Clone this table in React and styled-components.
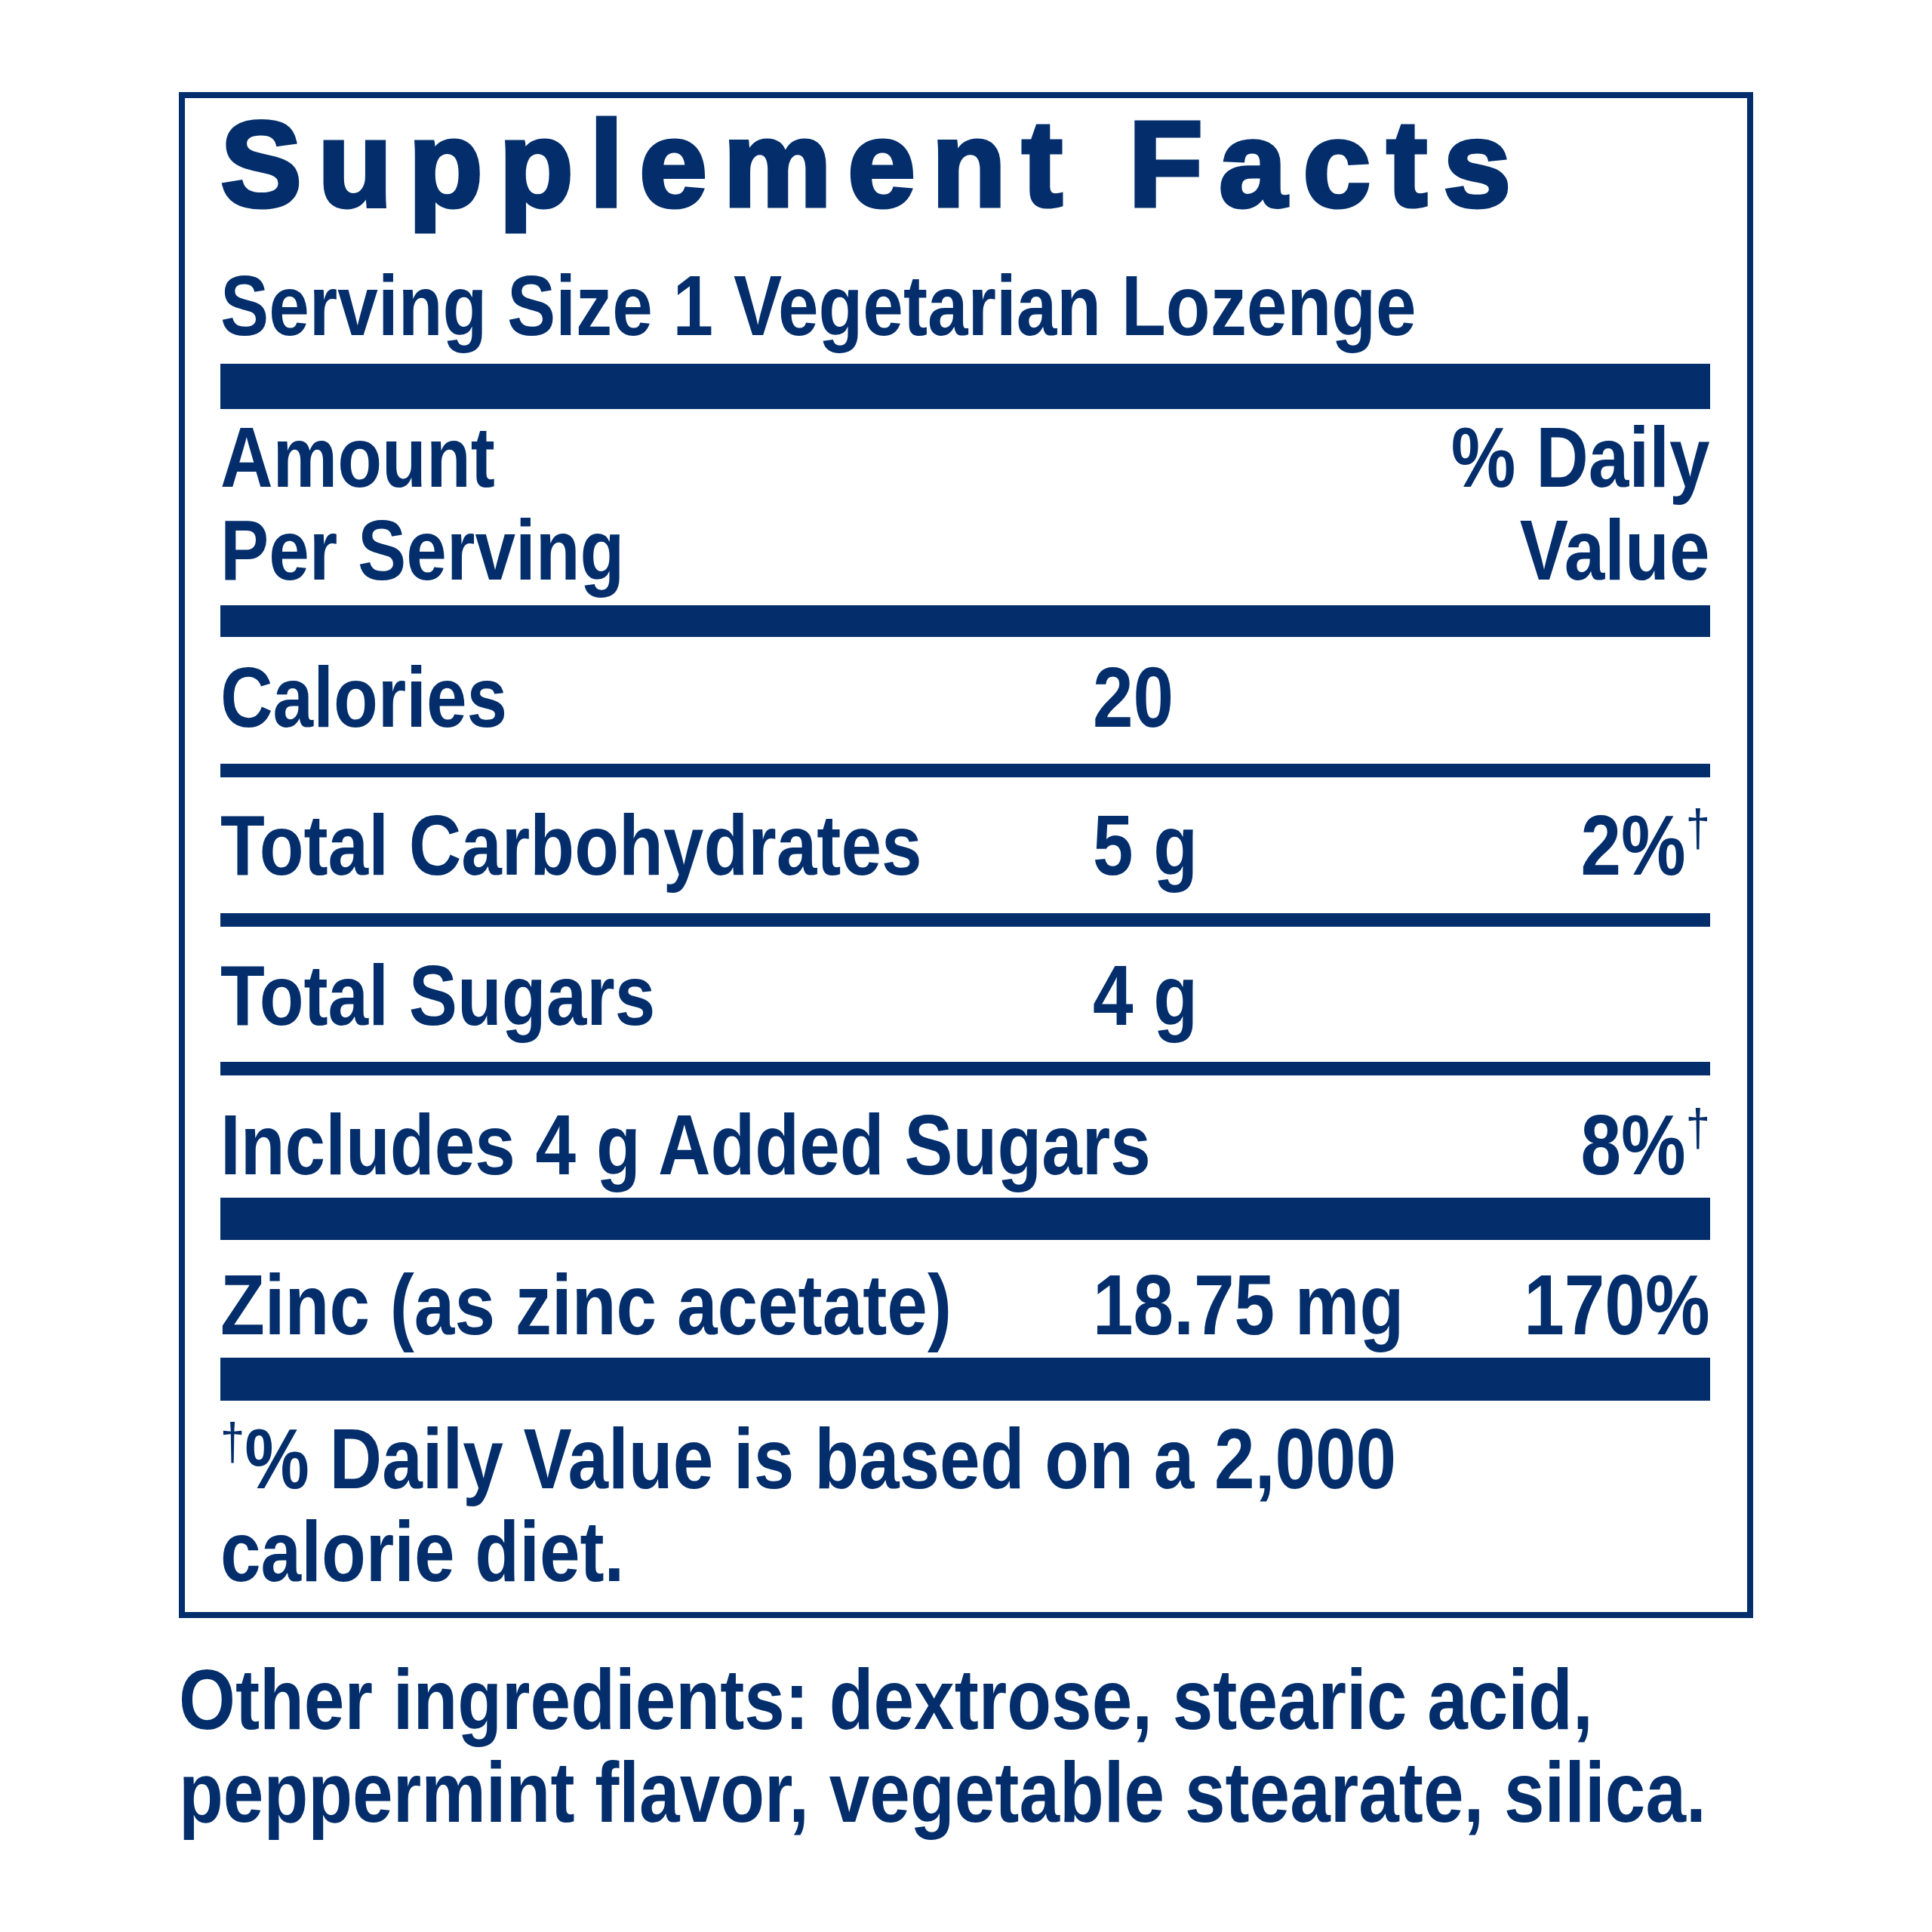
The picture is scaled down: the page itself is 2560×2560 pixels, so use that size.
import styled, { createGlobalStyle } from "styled-components";

const NAVY = "#032e6b";

const Global = createGlobalStyle`
  body {
    margin: 0;
    background: #fff;
    color: ${NAVY};
    font-family: "Liberation Sans", Arial, sans-serif;
  }
`;

const Page = styled.div`
  width: 2560px;
  min-height: 2560px;
  box-sizing: border-box;
  padding: 122px 0 0 237px;
`;

const Panel = styled.section`
  width: 2086px;
  box-sizing: border-box;
  border: 8px solid ${NAVY};
  padding: 6px 49px 19px 47px;
`;

const Title = styled.h1`
  margin: 0;
  font: 700 162px/162px "Liberation Sans", Arial, sans-serif;
  letter-spacing: 21px;
  -webkit-text-stroke: 5px ${NAVY};
  white-space: nowrap;
`;

// label type is a condensed bold grotesque; no condensed face is installed,
// so the bold face is squeezed horizontally
const Line = styled.div`
  font-size: 114px;
  font-weight: 700;
  line-height: 123px;
  white-space: nowrap;
  margin-top: ${(p) => p.$mt || 0}px;
  text-align: ${(p) => (p.$right ? "right" : "left")};
  transform: scaleX(0.845);
  transform-origin: ${(p) => (p.$right ? "right" : "left")} center;
`;

const Rule = styled.div`
  height: ${(p) => p.$h}px;
  margin-top: ${(p) => p.$mt || 0}px;
  background: ${NAVY};
`;

const Head = styled.div`
  display: flex;
  justify-content: space-between;
  padding: 2px 0 12px;
`;

const Row = styled.div`
  display: grid;
  grid-template-columns: 1156px minmax(0, 1fr) auto;
  padding: ${(p) => p.$pt}px 0 ${(p) => p.$pb}px;
`;

const Dagger = styled.span`
  font-size: 0.6em;
  font-weight: 400;
  line-height: 0;
  vertical-align: 38px;
`;

const Note = styled.div`
  padding-top: 15px;
`;

const Ingredients = styled.div`
  margin-top: 46px;
`;

const rows = [
  { label: "Calories", amount: "20", pt: 18, pb: 27, rule: 18 },
  { label: "Total Carbohydrates", amount: "5 g", dv: "2%", dag: true, pt: 28, pb: 29, rule: 18 },
  { label: "Total Sugars", amount: "4 g", pt: 29, pb: 27, rule: 18 },
  { label: "Includes 4 g Added Sugars", amount: "", dv: "8%", dag: true, pt: 30, pb: 9, rule: 56 },
  { label: "Zinc (as zinc acetate)", amount: "18.75 mg", dv: "170%", pt: 24, pb: 9, rule: 57 },
];

export default function App() {
  return (
    <>
      <Global />
      <Page>
        <Panel>
          <Title>Supplement Facts</Title>
          <Line $mt={45}>Serving Size 1 Vegetarian Lozenge</Line>
          <Rule $h={60} $mt={16} />
          <Head>
            <Line>
              Amount
              <br />
              Per Serving
            </Line>
            <Line $right>
              % Daily
              <br />
              Value
            </Line>
          </Head>
          <Rule $h={42} />
          {rows.map((r) => (
            <div key={r.label}>
              <Row $pt={r.pt} $pb={r.pb}>
                <Line>{r.label}</Line>
                <Line>{r.amount}</Line>
                <Line $right>
                  {r.dv}
                  {r.dag && <Dagger>†</Dagger>}
                </Line>
              </Row>
              <Rule $h={r.rule} />
            </div>
          ))}
          <Note>
            <Line>
              <Dagger>†</Dagger>% Daily Value is based on a 2,000
              <br />
              calorie diet.
            </Line>
          </Note>
        </Panel>
        <Ingredients>
          <Line>
            Other ingredients: dextrose, stearic acid,
            <br />
            peppermint flavor, vegetable stearate, silica.
          </Line>
        </Ingredients>
      </Page>
    </>
  );
}
